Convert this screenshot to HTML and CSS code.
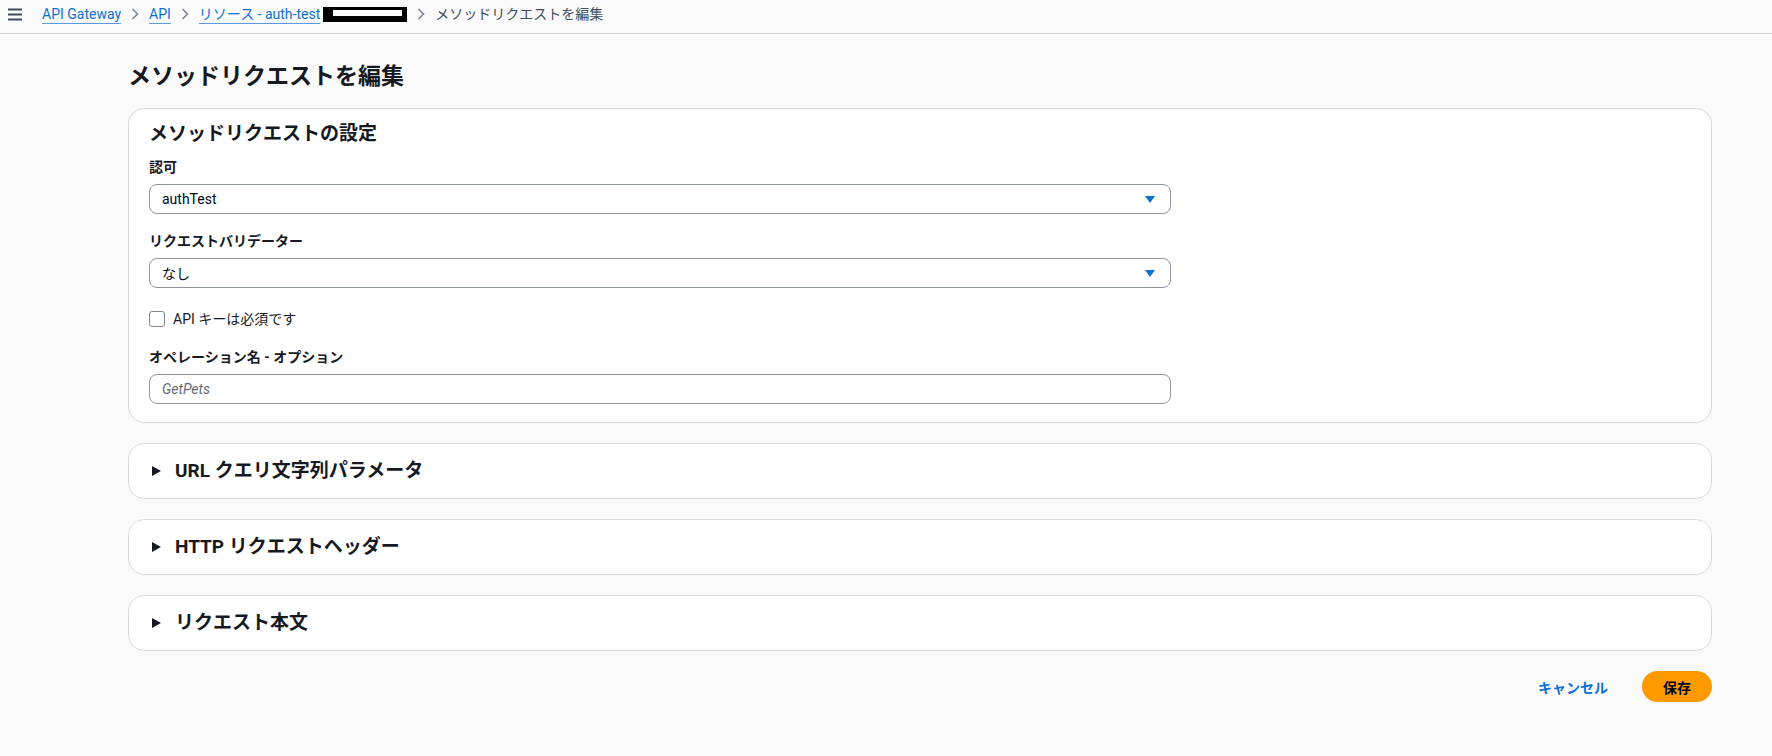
FILE: index.html
```html
<!DOCTYPE html>
<html lang="ja">
<head>
    <meta charset="UTF-8">
    <title>メソッドリクエストを編集</title>
    <link rel="stylesheet" href="styles.css">
</head>
<body>
    <header class="topbar">
        <button class="menu-toggle" aria-label="メニュー">
            <svg width="16" height="13" viewBox="0 0 16 13"><path d="M1 1.5h14M1 6.5h14M1 11.5h14" stroke="#414d5c" stroke-width="2"/></svg>
        </button>
        <nav class="breadcrumbs">
            <a href="#">API Gateway</a>
            <span class="crumb-sep"><svg width="8" height="12" viewBox="0 0 8 12"><path d="M1.5 1l5 5-5 5" fill="none" stroke="#7d8998" stroke-width="1.6"/></svg></span>
            <a href="#">API</a>
            <span class="crumb-sep"><svg width="8" height="12" viewBox="0 0 8 12"><path d="M1.5 1l5 5-5 5" fill="none" stroke="#7d8998" stroke-width="1.6"/></svg></span>
            <a href="#">リソース - auth-test</a>
            <span class="redacted"></span>
            <span class="crumb-sep"><svg width="8" height="12" viewBox="0 0 8 12"><path d="M1.5 1l5 5-5 5" fill="none" stroke="#7d8998" stroke-width="1.6"/></svg></span>
            <span class="crumb-current">メソッドリクエストを編集</span>
        </nav>
    </header>

    <main class="page">
        <h1 class="page-title">メソッドリクエストを編集</h1>

        <section class="panel">
            <h2 class="panel-title">メソッドリクエストの設定</h2>

            <div class="field">
                <label class="field-label">認可</label>
                <div class="select">
                    <span>authTest</span>
                    <svg class="caret" width="10" height="7" viewBox="0 0 10 7"><path d="M0 0h10L5 7z" fill="#0972d3"/></svg>
                </div>
            </div>

            <div class="field">
                <label class="field-label">リクエストバリデーター</label>
                <div class="select">
                    <span>なし</span>
                    <svg class="caret" width="10" height="7" viewBox="0 0 10 7"><path d="M0 0h10L5 7z" fill="#0972d3"/></svg>
                </div>
            </div>

            <label class="checkbox-row">
                <span class="checkbox"></span>
                <span>API キーは必須です</span>
            </label>

            <div class="field">
                <label class="field-label">オペレーション名 - オプション</label>
                <input class="text-input" type="text" placeholder="GetPets">
            </div>
        </section>

        <section class="expander">
            <span class="expander-icon"></span>
            <h2 class="expander-title">URL クエリ文字列パラメータ</h2>
        </section>

        <section class="expander">
            <span class="expander-icon"></span>
            <h2 class="expander-title">HTTP リクエストヘッダー</h2>
        </section>

        <section class="expander">
            <span class="expander-icon"></span>
            <h2 class="expander-title">リクエスト本文</h2>
        </section>

        <div class="actions">
            <button class="btn-link">キャンセル</button>
            <button class="btn-primary">保存</button>
        </div>
    </main>
</body>
</html>
```

FILE: styles.css
```css
html,
body {
  margin: 0;
  padding: 0;
}
body {
  background: #fafafa;
  color: #16191f;
  font-family: Roboto, "Noto Sans CJK JP", sans-serif;
  font-size: 14px;
}

/* top navigation strip */
.topbar {
  display: flex;
  align-items: center;
  height: 34px;
  padding-left: 7px;
  border-bottom: 1px solid #d5d5d5;
  box-sizing: border-box;
}
.menu-toggle {
  display: flex;
  padding: 0;
  margin: 0 19px 4px 0;
  border: 0;
  background: none;
}
.breadcrumbs {
  display: flex;
  align-items: center;
  margin-bottom: 5px;
  font-size: 14px;
  line-height: 20px;
}
.breadcrumbs a {
  color: #0972d3;
  text-decoration: underline;
  text-decoration-color: #5a9be0;
  text-underline-offset: 4px;
}
.crumb-sep {
  display: flex;
  margin: 0 10px;
}
.redacted {
  width: 84px;
  height: 15px;
  margin-left: 3px;
  box-sizing: border-box;
  border-style: solid;
  border-color: #000;
  border-width: 3px 5px 6px 10px;
  background: #fff;
}
.crumb-current {
  color: #414d5c;
}

/* page body */
.page {
  padding: 0 60px 0 128px;
}
.page-title {
  margin: 28px 0 16px;
  font-size: 23px;
  line-height: 30px;
  font-weight: 700;
}

.panel {
  background: #fff;
  border: 1px solid #d9d9d9;
  border-radius: 16px;
  padding: 12px 20px 18px;
}
.panel-title {
  margin: 0 0 10px;
  font-size: 19px;
  line-height: 26px;
  font-weight: 700;
}

.field {
  margin-bottom: 17px;
}
.field:last-child {
  margin-bottom: 0;
}
.field-label {
  display: block;
  margin-bottom: 7px;
  font-weight: 700;
  line-height: 20px;
}
.select,
.text-input {
  display: flex;
  align-items: center;
  justify-content: space-between;
  width: 1022px;
  height: 30px;
  box-sizing: border-box;
  padding: 0 15px 0 12px;
  border: 1px solid #8d949c;
  border-radius: 8px;
  background: #fff;
  color: #000716;
  font-family: inherit;
  font-size: 14px;
}
.text-input::placeholder {
  color: #5f6b7a;
  font-style: italic;
}
.text-input:focus {
  outline: none;
}

/* top margin collapses with the field above, so it carries the whole gap */
.checkbox-row {
  display: flex;
  align-items: center;
  gap: 8px;
  margin: 21px 0 18px;
  line-height: 20px;
}
.checkbox {
  width: 16px;
  height: 16px;
  box-sizing: border-box;
  border: 1.5px solid #7d8998;
  border-radius: 3px;
  background: #fff;
}

/* collapsed sections */
.expander {
  display: flex;
  align-items: center;
  gap: 14px;
  height: 56px;
  box-sizing: border-box;
  margin-top: 20px;
  padding-left: 23px;
  background: #fff;
  border: 1px solid #d9d9d9;
  border-radius: 16px;
}
.expander-icon {
  width: 0;
  height: 0;
  border-top: 5px solid transparent;
  border-bottom: 5px solid transparent;
  border-left: 9px solid #16191f;
}
.expander-title {
  margin: 0;
  font-size: 19px;
  line-height: 26px;
  font-weight: 700;
}

.actions {
  display: flex;
  justify-content: flex-end;
  align-items: center;
  gap: 34px;
  margin-top: 20px;
}
.btn-link {
  padding: 0;
  border: 0;
  background: none;
  color: #0972d3;
  font-family: inherit;
  font-size: 14px;
  font-weight: 700;
}
.btn-primary {
  width: 70px;
  height: 31px;
  border: 0;
  border-radius: 16px;
  background: #ff9900;
  color: #000716;
  font-family: inherit;
  font-size: 14px;
  font-weight: 700;
}
```
